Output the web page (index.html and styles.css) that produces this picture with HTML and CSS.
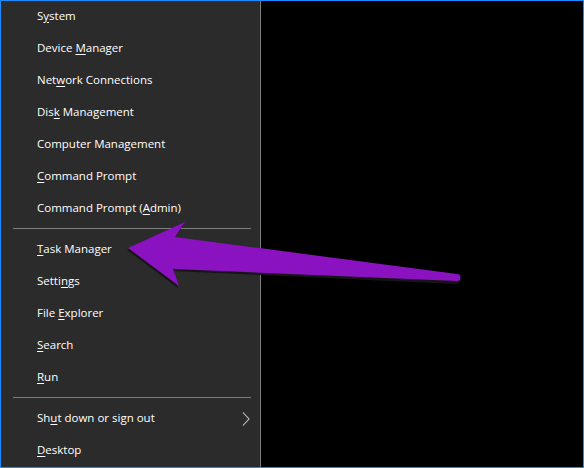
FILE: index.html
```html
<!DOCTYPE html>
<html>
<head>
<meta charset="utf-8">
<link rel="stylesheet" href="styles.css">
</head>
<body>
<div class="screen">
  <div class="menu">
    <div class="item"><span>S<u>y</u>stem</span></div>
    <div class="item"><span>Device <u>M</u>anager</span></div>
    <div class="item"><span>Net<u>w</u>ork Connections</span></div>
    <div class="item"><span>Dis<u>k</u> Management</span></div>
    <div class="item"><span>Computer Management</span></div>
    <div class="item"><span><u>C</u>ommand Prompt</span></div>
    <div class="item"><span>Command Prompt (<u>A</u>dmin)</span></div>
    <div class="sep"></div>
    <div class="item"><span><u>T</u>ask Manager</span></div>
    <div class="item"><span>Setti<u>n</u>gs</span></div>
    <div class="item"><span>File <u>E</u>xplorer</span></div>
    <div class="item"><span><u>S</u>earch</span></div>
    <div class="item"><span><u>R</u>un</span></div>
    <div class="sep"></div>
    <div class="item sub"><span>Sh<u>u</u>t down or sign out</span>
      <svg class="chev" width="8" height="14" viewBox="0 0 8 14"><polyline points="1,0.5 7,7 1,13.5" fill="none" stroke="#c8c8c8" stroke-width="1.1"/></svg>
    </div>
    <div class="item"><span><u>D</u>esktop</span></div>
  </div>
  <div class="desk"></div>
  <svg class="arrow" width="584" height="468" viewBox="0 0 584 468">
    <path d="M127,250 L184,224 L174,239 L456,277 A3.5,3.5 0 0 1 456,284 L172,271 L178,288 Z" fill="#151515"/>
    <path d="M128,248 L185,222 L175,237 L457,274 A3.5,3.5 0 0 1 457,281 L173,269 L179,286 Z" fill="#8a12c0"/>
  </svg>
</div>
</body>
</html>
```
FILE: styles.css
```css
html, body {
  margin: 0;
  padding: 0;
  background: #000;
}
.screen {
  position: relative;
  width: 584px;
  height: 468px;
  box-sizing: border-box;
  border: 1px solid #1a8cff;
  display: flex;
  overflow: hidden;
}
.menu {
  width: 260px;
  box-sizing: border-box;
  background: #2b2b2b;
  border-right: 1px solid #7a7a7a;
  display: flex;
  flex-direction: column;
  font-family: "Open Sans", "Noto Sans", sans-serif;
  font-size: 11.5px;
  color: #ffffff;
}
.item {
  height: 32px;
  flex: none;
  display: flex;
  align-items: center;
  padding-left: 36px;
  padding-right: 10px;
  padding-bottom: 4px;
  box-sizing: border-box;
  white-space: nowrap;
}
.item u {
  text-decoration-thickness: 1px;
  text-underline-offset: 2px;
}
.sub {
  justify-content: space-between;
}
.chev {
  display: block;
  margin-top: 3px;
}
.sep {
  height: 9px;
  flex: none;
  box-sizing: border-box;
  padding-top: 3px;
  margin-left: 12px;
  width: 238px;
}
.sep::before {
  content: "";
  display: block;
  height: 1px;
  background: #7f7f7f;
}
.desk {
  flex: 1;
  background: #000;
}
.arrow {
  position: absolute;
  left: -1px;
  top: -1px;
}
```
